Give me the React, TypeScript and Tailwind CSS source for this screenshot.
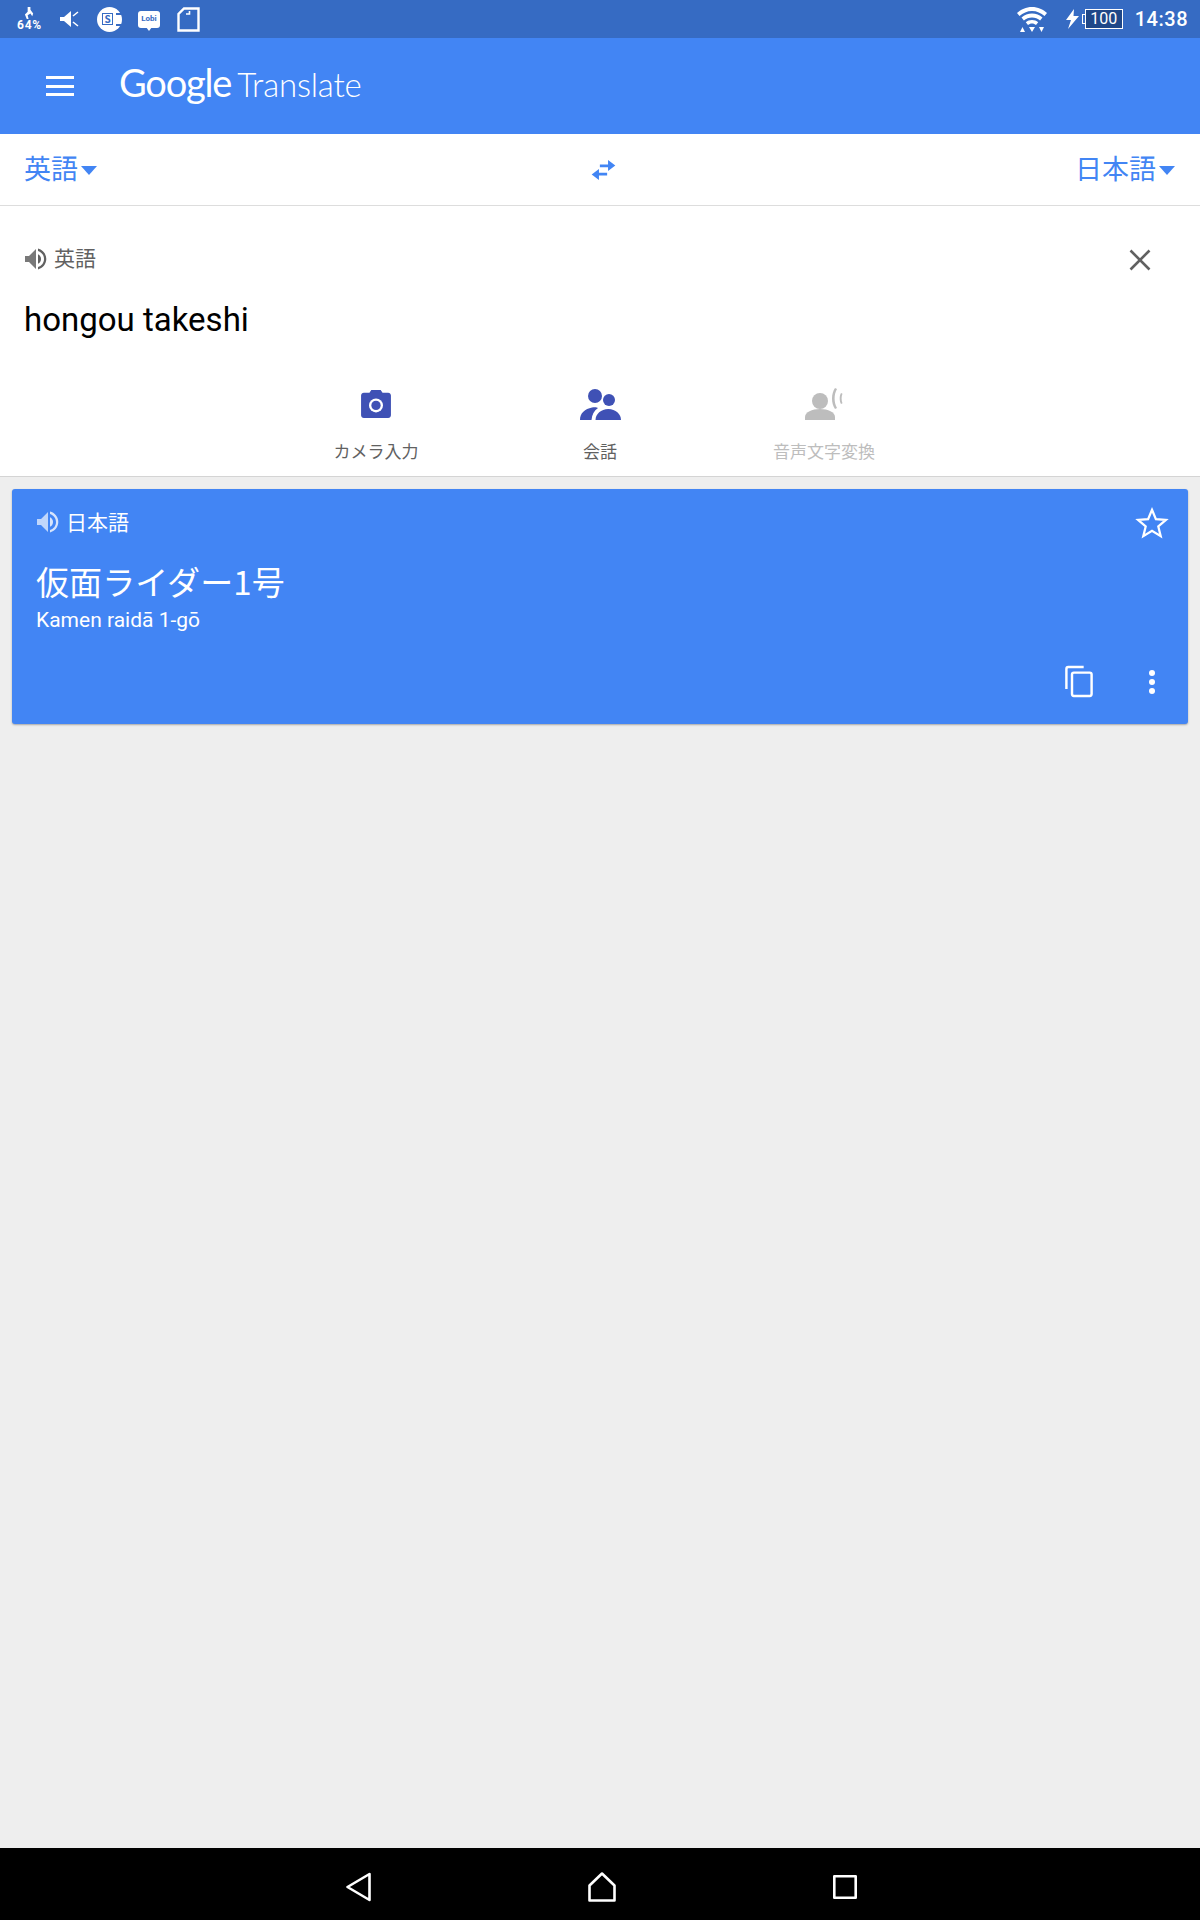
import { ReactNode } from 'react';

const cjk = 'font-["Noto_Sans_CJK_JP","Noto_Sans_CJK_SC",sans-serif]';
const roboto = 'font-["Roboto","Noto_Sans_CJK_JP",sans-serif]';

function Speaker({ className }: { className: string }) {
  return (
    <svg viewBox="0 0 24 24" className={className} fill="currentColor">
      <path d="M1 9v6h4l7 7V2L5 9H1z" opacity="0.85" />
      <path d="M14 7.2v9.6c1.8-.8 3-2.7 3-4.8s-1.2-4-3-4.8z" />
      <path d="M14 1.6v2.3c3.4 1 6 4.200 6 8.100s-2.600 7.100-6 8.100v2.300c4.700-1.100 8.300-5.300 8.300-10.400S18.700 2.700 14 1.600z" />
    </svg>
  );
}

function Caret() {
  return <span className="ml-[3px] mt-[5px] h-0 w-0 border-x-[8px] border-t-[9px] border-x-transparent border-t-[#4285f4]" />;
}

function Tab({ icon, label, color }: { icon: ReactNode; label: string; color: string }) {
  return (
    <div className="flex w-[224px] flex-col items-center">
      <div className="flex h-[44px] items-center justify-center">{icon}</div>
      <div className={`mt-[13px] text-[17px] leading-[24px] ${color}`}>{label}</div>
    </div>
  );
}

function StatusBar() {
  return (
    <div className="flex h-[38px] items-center justify-between bg-[#366bc3] pl-[17px] pr-3 text-white">
      <div className="flex items-center">
        <div className="relative h-[34px] w-[25px]">
          <svg viewBox="0 0 12 14" className="absolute left-[7px] top-[5px] h-[13px] w-[11px]" fill="#fff">
            <path d="M4 0h3v3l3 4-1 3-2-3-3 2 1 4H3L1 8l3-3z" />
          </svg>
          <span className={`absolute left-0 top-[15px] text-[12px] font-bold leading-[16px] tracking-[0.8px] ${roboto}`}>64%</span>
        </div>
        <svg viewBox="0 0 20 16" className="ml-[18px] h-[16px] w-[20px]" fill="#fff">
          <path d="M0 6h4l7-6v16l-7-6H0z" />
          <path d="M13 5l5-4M13 11l5 4" stroke="#fff" strokeWidth="1.600" />
        </svg>
        <div className="relative ml-[17px] flex h-[25px] w-[25px] items-center justify-center rounded-full bg-white">
          <span className="ml-[-4px] flex h-[12px] w-[11px] items-center justify-center border border-[#366bc3] text-[10px] font-bold leading-none text-[#366bc3]">S</span>
          <span className="absolute right-0 top-[6px] h-[13px] w-[6px] border-y-2 border-[#366bc3]" />
        </div>
        <div className="relative ml-[16px] flex h-[17px] w-[22px] items-center justify-center rounded-[3px] bg-white">
          <span className={`text-[8px] font-bold leading-none text-[#366bc3] ${roboto}`}>Lobi</span>
          <span className="absolute left-[8px] top-[16px] h-0 w-0 border-x-[3px] border-t-[4px] border-x-transparent border-t-white" />
        </div>
        <svg viewBox="0 0 23 25" className="ml-[17px] h-[25px] w-[23px]" fill="none" stroke="#fff" strokeWidth="2.400">
          <path d="M7 1.500h14.500v22H1.500V7z" />
          <path d="M9 7h3.500V4" strokeWidth="1.600" />
        </svg>
      </div>
      <div className="flex items-center">
        <svg viewBox="0 0 30 26" className="mr-[1px] h-[26px] w-[30px]" fill="#fff">
          <path d="M15 1C9 1 4 3.500 0 7l2.500 3C6 7 10 5 15 5s9 2 12.500 5L30 7c-4-3.500-9-6-15-6z" />
          <path d="M15 7.500c-4 0-7.500 1.500-10.500 4l2.400 3c2.200-1.800 5-3 8.100-3s5.900 1.200 8.100 3l2.400-3c-3-2.500-6.500-4-10.500-4z" />
          <path d="M15 14c-2.400 0-4.500.9-6.200 2.300l2.200 2.700c1-.9 2.500-1.500 4-1.500s3 .6 4 1.500l2.200-2.700C19.500 14.900 17.400 14 15 14z" />
          <path d="M3 26l2.500-5L8 26zM12 21h6l-3 5zM22 21h5l-2.500 5z" />
        </svg>
        <svg viewBox="0 0 13 20" className="ml-[18px] h-[20px] w-[13px]" fill="#fff">
          <path d="M8 0L0 11h5l-3 9 11-13H7.500z" />
        </svg>
        <div className="relative ml-[6px] flex h-[20px] w-[38px] items-center justify-center border border-white bg-[#1f4788]">
          <span className={`text-[16px] leading-none ${roboto}`}>100</span>
          <span className="absolute left-[-4px] top-[4px] h-[10px] w-[3px] border-y border-l border-white" />
        </div>
        <span className={`ml-[12px] text-[20px] font-medium leading-none tracking-[0.5px] ${roboto}`}>14:38</span>
      </div>
    </div>
  );
}

export default function App() {
  return (
    <div className={`flex h-[1920px] w-[1200px] flex-col bg-[#eeeeee] ${cjk}`}>
      <StatusBar />

      {/* ヘッダー */}
      <div className="flex h-[96px] items-center bg-[#4285f4] pb-2 pl-[46px] text-white">
        <div className="mt-2 flex h-[20px] w-[28px] flex-col justify-between">
          <span className="h-[3px] bg-white" />
          <span className="h-[3px] bg-white" />
          <span className="h-[3px] bg-white" />
        </div>
        <div className={`ml-[45px] flex items-baseline font-["Lato",sans-serif] text-[38px] leading-none`}>
          <span className="font-normal tracking-[-1.2px]">Google</span>
          <span className="ml-[6px] text-[33px] font-light tracking-[-0.2px]">Translate</span>
        </div>
      </div>

      {/* 言語選択 */}
      <div className="flex h-[72px] items-center border-b border-[#dddddd] bg-white pl-6 pr-[25px] text-[27px] text-[#4285f4]">
        <div className="mb-1 flex flex-1 items-center leading-none">
          英語
          <Caret />
        </div>
        <svg viewBox="0 0 28 22" className="ml-[7px] h-[20px] w-[27px]" fill="#4285f4">
          <path d="M10 5h9V0l8 6-8 6V8h-9z" />
          <path d="M18 14H9v-4L1 16l8 6v-5h9z" />
        </svg>
        <div className="mb-1 flex flex-1 items-center justify-end leading-none">
          日本語
          <Caret />
        </div>
      </div>

      {/* 入力 */}
      <div className="border-b border-[#d4d4d4] bg-white">
        <div className="flex h-[84px] items-end justify-between pb-[16px] pl-6 pr-[49px]">
          <div className="flex items-center text-[#616161]">
            <Speaker className="h-[24px] w-[24px]" />
            <span className="mb-[3px] ml-[6px] text-[21px] leading-[28px]">英語</span>
          </div>
          <svg viewBox="0 0 22 22" className="mb-[3px] h-[22px] w-[22px]" stroke="#616161" strokeWidth="2.600">
            <path d="M1.500 1.500l19 19M20.500 1.500l-19 19" />
          </svg>
        </div>
        <div className={`pl-6 pt-[6px] text-[33px] leading-[48px] text-black ${roboto}`}>hongou takeshi</div>
        <div className="mt-[38px] flex h-[94px] justify-center">
          <Tab
            color="text-[#616161]"
            label="カメラ入力"
            icon={
              <svg viewBox="0 0 32 30" className="h-[28px] w-[30px]" fill="#3f51b5">
                <path d="M3 3h6l2-3h10l2 3h6c1.700 0 3 1.300 3 3v21c0 1.700-1.300 3-3 3H3c-1.700 0-3-1.300-3-3V6c0-1.700 1.300-3 3-3z" />
                <circle cx="16" cy="16.500" r="7.500" fill="#fff" />
                <circle cx="16" cy="16.500" r="5" fill="#3f51b5" />
              </svg>
            }
          />
          <Tab
            color="text-[#616161]"
            label="会話"
            icon={
              <svg viewBox="0 0 41 31" className="h-[31px] w-[41px]" fill="#3f51b5">
                <circle cx="15" cy="7" r="7" />
                <circle cx="29" cy="11" r="6" />
                <path d="M0 31c0-7 5-11 12-12.500 3-.6 5-.2 6 .5-4 2.500-6 6.500-6.500 12z" />
                <path d="M15.500 31c0-6 5.500-11 12.800-11S41 25 41 31z" />
              </svg>
            }
          />
          <Tab
            color="text-[#bdbdbd]"
            label="音声文字変換"
            icon={
              <svg viewBox="0 0 38 32" className="h-[32px] w-[38px]" fill="#bdbdbd">
                <circle cx="15" cy="13" r="8" />
                <path d="M0 32v-3c0-5 7-8 15-8s15 3 15 8v3z" />
                <path d="M30 0l2 1c-1.600 3-2.400 6-2.400 9.500s.8 6.500 2.400 9.500l-2 1c-2-3-3-6.500-3-10.500S28 3 30 0z" />
                <path d="M36 5l1.500.7c-.6 1.400-.9 3-.9 4.800s.3 3.400.9 4.800L36 16c-.9-1.500-1.300-3.300-1.300-5.500S35.100 6.500 36 5z" />
              </svg>
            }
          />
        </div>
      </div>

      {/* 翻訳結果 */}
      <div className="mx-3 mt-3 h-[235px] rounded-[3px] bg-[#4285f4] pl-6 pr-[18px] text-white shadow-[0_1px_2px_rgba(0,0,0,0.3)]">
        <div className="flex h-[48px] items-end justify-between">
          <div className="flex items-center">
            <Speaker className="h-[24px] w-[24px] text-[#d6e4fc]" />
            <span className="mb-[2px] ml-[6px] text-[21px] leading-[28px]">日本語</span>
          </div>
          <svg viewBox="0 0 24 24" className="mb-[-4px] h-[36px] w-[36px]" fill="none" stroke="#fff" strokeWidth="1.500">
            <path d="M12 3.200l2.600 6.200 6.700.5-5.100 4.400 1.600 6.500L12 17.200l-5.800 3.600 1.600-6.500-5.100-4.400 6.700-.5z" />
          </svg>
        </div>
        <div className="mt-[22px] text-[33px] font-normal leading-[44px] tracking-[0.1px]">仮面ライダー1号</div>
        <div className={`mt-[5px] text-[21px] leading-[24px] ${roboto}`}>Kamen raidā 1-gō</div>
        <div className="mt-[33px] flex items-center justify-end">
          <svg viewBox="0 0 30 34" className="h-[33px] w-[28px]" fill="none" stroke="#fff" strokeWidth="2.600">
            <path d="M20 1.500H3.500c-1 0-2 1-2 2V25" />
            <rect x="7.500" y="7.500" width="21" height="25" rx="2" />
          </svg>
          <div className="ml-[56px] mr-[15px] flex flex-col gap-[3px]">
            <span className="h-[6px] w-[6px] rounded-full bg-white" />
            <span className="h-[6px] w-[6px] rounded-full bg-white" />
            <span className="h-[6px] w-[6px] rounded-full bg-white" />
          </div>
        </div>
      </div>

      <div className="flex-1" />

      {/* ナビゲーションバー */}
      <div className="flex h-[72px] items-center justify-center bg-black pl-[2px] pt-[6px]">
        <svg viewBox="0 0 26 30" className="h-[30px] w-[26px]" fill="none" stroke="#fff" strokeWidth="2.600" strokeLinejoin="round">
          <path d="M23.500 2v26L1.500 15z" />
        </svg>
        <svg viewBox="0 0 28 30" className="ml-[216px] h-[30px] w-[28px]" fill="none" stroke="#fff" strokeWidth="2.600" strokeLinejoin="round">
          <path d="M14 1.500L26.500 13.500v15h-25v-15z" />
        </svg>
        <svg viewBox="0 0 24 24" className="ml-[217px] h-[24px] w-[24px]" fill="none" stroke="#fff" strokeWidth="2.600" strokeLinejoin="round">
          <rect x="1.300" y="1.300" width="21.400" height="21.400" />
        </svg>
      </div>
    </div>
  );
}
